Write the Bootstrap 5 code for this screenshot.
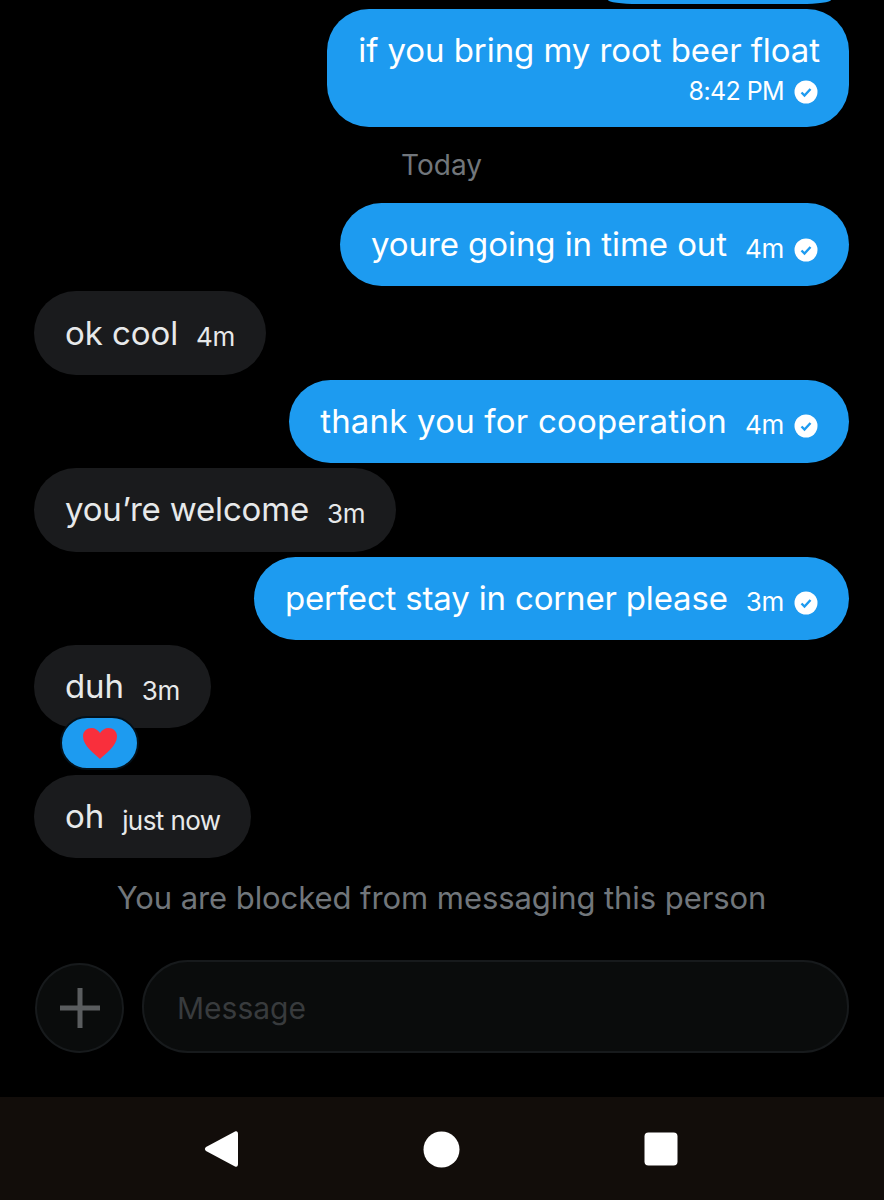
<!doctype html>
<html lang="en"><head><meta charset="utf-8"><title>Messages</title>
<link href="https://cdn.jsdelivr.net/npm/bootstrap@5.3.0/dist/css/bootstrap.min.css" rel="stylesheet">
<style>
html,body{height:1200px;overflow:hidden;background:#000;}
body{font-family:Inter,Roboto,"Liberation Sans",sans-serif;width:884px;}
.chat-pane{height:1097px;padding:0 35px 0 34px;overflow:hidden;}
.tip-bubble{height:4px;width:223px;background:#1d9bf0;border-radius:0 0 30px 30px / 0 0 4px 4px;margin-right:18px;}
.msg{border-radius:42px;height:83.4px;padding:0 31px;font-size:33px;letter-spacing:-.07px;line-height:1;margin-top:5px;position:relative;white-space:nowrap;}
.msg-out{background:#1d9bf0;color:#fff;}
.msg-in{background:#1a1b1d;color:#e7e9ea;}
.msg-tall{height:118px;margin-top:5px;border-radius:42px;padding-right:29px;}
.track-wide{letter-spacing:.2px;}
.track-tight{letter-spacing:-.17px;}
.stamp{font-size:26px;margin-left:18px;position:relative;top:4px;letter-spacing:-.3px;}
.stamp-tight{letter-spacing:-.6px;}
.stamp-plain{font-size:25px;letter-spacing:-.6px;position:relative;top:1px;}
.stamp-row{margin-top:11px;margin-right:2px;}
.tick{width:24px;height:24px;margin-left:10px;flex:none;position:relative;top:5px;}
.stamp-row .tick{top:2px;}
.day-label{color:#71767b;font-size:28px;line-height:1;text-align:center;margin:24px 0;}
.react-pill{position:absolute;left:26px;top:71px;width:79px;height:54px;padding-top:2px;background:#1d9bf0;border:2px solid #03111b;border-radius:27px;}
.blocked-note{color:#71767b;font-size:31px;letter-spacing:-.07px;line-height:1;text-align:center;margin-top:24px;}
.compose-row{margin-top:47px;gap:18px;margin-left:1px;}
.plus-btn{width:89px;height:90px;border:2px solid #171a1c;border-radius:50%;background:#0a0c0c;flex:none;margin-top:3px;}
.compose-box{flex:1;height:93px;border:2px solid #171a1c;border-radius:46px;background:#0a0c0c;color:#383b3d;font-size:30px;padding:3px 0 0 33px;}
.sys-bar{height:103px;background:#120d0a;}
.sys-bar svg{position:absolute;}
.after-react{margin-top:46.600px;}
</style></head>
<body>
<main class="chat-pane d-flex flex-column">
  <div class="tip-bubble align-self-end"></div>
  <div class="msg msg-out msg-tall align-self-end d-flex flex-column justify-content-center">
    <div>if you bring my root beer float</div>
    <div class="stamp-row d-flex align-items-center justify-content-end"><span class="stamp-plain">8:42 PM</span><svg class="tick" viewBox="0 0 24 24"><circle cx="12" cy="12" r="11.5" fill="#fff"/><path d="M7.500 12.500l3 3L16.500 9" fill="none" stroke="#1d9bf0" stroke-width="2.400"/></svg></div>
  </div>
  <div class="day-label">Today</div>
  <div class="msg msg-out align-self-end d-flex align-items-center m-0"><span>youre going in time out</span><span class="stamp">4m</span><svg class="tick" viewBox="0 0 24 24"><circle cx="12" cy="12" r="11.5" fill="#fff"/><path d="M7.500 12.500l3 3L16.500 9" fill="none" stroke="#1d9bf0" stroke-width="2.400"/></svg></div>
  <div class="msg msg-in align-self-start d-flex align-items-center"><span>ok cool</span><span class="stamp">4m</span></div>
  <div class="msg msg-out align-self-end d-flex align-items-center"><span class="track-wide">thank you for cooperation</span><span class="stamp">4m</span><svg class="tick" viewBox="0 0 24 24"><circle cx="12" cy="12" r="11.5" fill="#fff"/><path d="M7.500 12.500l3 3L16.500 9" fill="none" stroke="#1d9bf0" stroke-width="2.400"/></svg></div>
  <div class="msg msg-in align-self-start d-flex align-items-center"><span class="track-tight">you’re welcome</span><span class="stamp">3m</span></div>
  <div class="msg msg-out align-self-end d-flex align-items-center"><span class="track-tight">perfect stay in corner please</span><span class="stamp">3m</span><svg class="tick" viewBox="0 0 24 24"><circle cx="12" cy="12" r="11.5" fill="#fff"/><path d="M7.500 12.500l3 3L16.500 9" fill="none" stroke="#1d9bf0" stroke-width="2.400"/></svg></div>
  <div class="msg msg-in align-self-start d-flex align-items-center"><span class="track-tight">duh</span><span class="stamp">3m</span>
    <div class="react-pill d-flex align-items-center justify-content-center"><svg width="36" height="33" viewBox="0 0 36 33"><path d="M18 32C13 27 1 19 1 9.500C1 4 5 1 9.500 1C13 1 16 3 18 6C20 3 23 1 26.500 1C31 1 35 4 35 9.500C35 19 23 27 18 32Z" fill="#f92f3c"/></svg></div>
  </div>
  <div class="msg msg-in align-self-start d-flex align-items-center after-react"><span>oh</span><span class="stamp stamp-tight">just now</span></div>
  <div class="blocked-note">You are blocked from messaging this person</div>
  <div class="compose-row d-flex">
    <div class="plus-btn d-flex align-items-center justify-content-center"><svg width="42" height="42" viewBox="0 0 42 42"><path d="M21 1v40M1 21h40" stroke="#5a5d5f" stroke-width="5" fill="none"/></svg></div>
    <div class="compose-box d-flex align-items-center">Message</div>
  </div>
</main>
<nav class="sys-bar position-relative">
  <svg style="left:204px;top:33px" width="35" height="38" viewBox="0 0 35 38"><path d="M31 1.500C33 0.500 34 2 34 4V34C34 36 33 37.500 31 36.500L2 21C0.500 20 0.500 18 2 17Z" fill="#fff"/></svg>
  <svg style="left:423px;top:34px" width="37" height="37" viewBox="0 0 37 37"><circle cx="18.500" cy="18.500" r="18" fill="#fff"/></svg>
  <svg style="left:644px;top:35px" width="34" height="34" viewBox="0 0 34 34"><rect x="0.500" y="0.500" width="33" height="33" rx="4" fill="#fff"/></svg>
</nav>
</body></html>
